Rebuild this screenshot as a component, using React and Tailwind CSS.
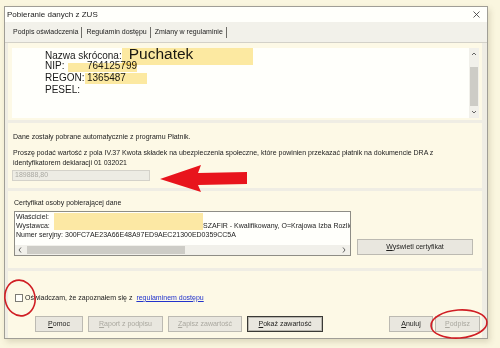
import React from "react";

const U = ({ children }) => <span className="underline">{children}</span>;

function Btn({ children, w, disabled, main }) {
  return (
    <div
      className={`h-[16px] ${w} flex items-center justify-center text-[7px] bg-[#e9e7df] border ${
        main ? "border-[#3a3a36] shadow-[inset_0_0_0_1px_#b8b6ae]" : "border-[#bcbab2]"
      } ${disabled ? "text-[#aaa89f]" : "text-[#1e1e1c]"}`}
    >
      {children}
    </div>
  );
}

function Tab({ label }) {
  return (
    <div className="flex items-center">
      <span className="text-[7px] text-[#222]">{label}</span>
      <div className="w-px h-[11px] bg-[#6e6d68] ml-[3px] mr-[4px]" />
    </div>
  );
}

export default function App() {
  return (
    <div className="relative w-[500px] h-[348px] overflow-hidden bg-[#faf6df] pt-[6px] pl-[4px] font-['Liberation_Sans',Arial,sans-serif]">
      <div className="w-[484px] h-[333px] border border-[#a09e96] bg-[#efede4] flex flex-col shadow-[2px_3px_6px_rgba(90,80,40,0.18)]">
        {/* title bar */}
        <div className="h-[15px] bg-[#fffffb] flex items-center justify-between pl-[2px] pr-[7px]">
          <span className="text-[8px] text-[#222]">Pobieranie danych z ZUS</span>
          <svg width="7" height="7" viewBox="0 0 7 7">
            <path d="M0.5 0.5L6.5 6.5M6.5 0.5L0.5 6.5" stroke="#333" strokeWidth="0.8" />
          </svg>
        </div>

        {/* tabs */}
        <div className="h-[21px] bg-[#f2f1ea] border-b border-[#d3d1c8] flex items-center pl-[8px]">
          <Tab label="Podpis oświadczenia" />
          <Tab label="Regulamin dostępu" />
          <Tab label="Zmiany w  regulaminie" />
        </div>

        {/* body */}
        <div className="flex-1 flex flex-col gap-[3px] pl-[3px] pr-[5px]">
          {/* panel 1 */}
          <div className="h-[77px] bg-[#fdf9e6] pt-[5px] pl-[4px] pr-[3px] pb-[2px] flex">
            <div className="relative flex-1 bg-[#fffffb] pl-[33px] text-[10px] text-[#1a1a1a]">
              <div className="absolute left-[110px] top-0 w-[131px] h-[17px] bg-[#fce9a4] mix-blend-multiply" />
              <div className="absolute left-[56px] top-[15px] w-[69px] h-[9px] bg-[#fce9a4] mix-blend-multiply" />
              <div className="absolute left-[73px] top-[25px] w-[62px] h-[11px] bg-[#fce9a4] mix-blend-multiply" />
              <div className="h-[12px] leading-[12px] flex items-baseline whitespace-nowrap">
                <span>Nazwa skrócona:</span>
                <span className="ml-[7px] text-[15.5px] leading-[12px]">Puchatek</span>
              </div>
              <div className="h-[12px] leading-[12px] flex">
                <span className="w-[42px]">NIP:</span>
                <span>764125799</span>
              </div>
              <div className="h-[12px] leading-[12px] flex">
                <span className="w-[42px]">REGON:</span>
                <span>1365487</span>
              </div>
              <div className="h-[12px] leading-[12px]">PESEL:</div>
            </div>
            <div className="w-[10px] bg-[#f1f0ea] flex flex-col items-center">
              <svg width="6" height="12" viewBox="0 0 6 12">
                <path d="M1 7L3 5L5 7" stroke="#555" strokeWidth="0.9" fill="none" />
              </svg>
              <div className="mt-[7px] w-[8px] h-[39px] bg-[#cdccc6]" />
              <svg className="mt-auto" width="6" height="12" viewBox="0 0 6 12">
                <path d="M1 5L3 7L5 5" stroke="#555" strokeWidth="0.9" fill="none" />
              </svg>
            </div>
          </div>

          {/* panel 2 */}
          <div className="h-[65px] bg-[#fdf9e6] pl-[5px] pt-[9px] text-[7px] text-[#222] whitespace-nowrap">
            <div className="leading-[10px]">Dane zostały pobrane automatycznie z programu Płatnik.</div>
            <div className="mt-[6px] leading-[10px]">
              Proszę podać wartość z pola IV.37 Kwota składek na ubezpieczenia społeczne, które powinien przekazać płatnik na dokumencie DRA z
            </div>
            <div className="leading-[10px]">identyfikatorem deklaracji 01 032021</div>
            <div className="mt-[2px] ml-[-1px] w-[138px] h-[11px] bg-[#edece4] border border-[#d4d2ca] flex items-center pl-[2px] text-[#aaa9a2]">
              189888,80
            </div>
          </div>

          {/* panel 3 */}
          <div className="h-[77px] bg-[#fdf9e6] pl-[6px] pt-[7px] text-[7px] text-[#222]">
            <div className="leading-[10px]">Certyfikat osoby pobierającej dane</div>
            <div className="mt-[3px] flex items-end">
              <div className="relative w-[337px] h-[45px] border border-[#8e8d86] bg-[#fffffb] flex flex-col justify-between overflow-hidden whitespace-nowrap">
                <div className="absolute left-[39px] top-[1px] w-[149px] h-[17px] bg-[#fce8a4]" />
                <div className="pl-[1px] leading-[9px]">
                  <div>Właściciel:</div>
                  <div className="flex">
                    <span className="w-[38px] shrink-0">Wystawca:</span>
                    <span className="ml-[149px]">SZAFIR - Kwalifikowany, O=Krajowa Izba Rozlic</span>
                  </div>
                  <div>Numer seryjny:  300FC7AE23A66E48A97ED9AEC21300ED0359CC5A</div>
                </div>
                <div className="h-[10px] bg-[#f1f0ea] flex items-center">
                  <svg className="ml-[2px]" width="6" height="8" viewBox="0 0 6 8">
                    <path d="M4 1.5L2 4L4 6.5" stroke="#555" strokeWidth="0.9" fill="none" />
                  </svg>
                  <div className="ml-[4px] w-[158px] h-[8px] bg-[#cdccc6]" />
                  <svg className="ml-auto mr-[3px]" width="6" height="8" viewBox="0 0 6 8">
                    <path d="M2 1.5L4 4L2 6.5" stroke="#555" strokeWidth="0.9" fill="none" />
                  </svg>
                </div>
              </div>
              <div className="ml-[6px] mb-[1px]">
                <Btn w="w-[116px]">
                  <span><U>W</U>yświetl certyfikat</span>
                </Btn>
              </div>
            </div>
          </div>

          {/* panel 4 */}
          <div className="flex-1 bg-[#fdf9e6] pt-[23px] text-[7px] text-[#222]">
            <div className="pl-[7px] flex items-center h-[8px]">
              <div className="w-[8px] h-[8px] border border-[#7c7b74] bg-[#fffffb]" />
              <span className="ml-[2px]">Oświadczam, że zapoznałem się z</span>
              <span className="ml-[4px] text-[#2233cc] underline">regulaminem dostępu</span>
            </div>
            <div className="mt-[14px] pl-[27px] pr-[2px] flex gap-[5px]">
              <Btn w="w-[48px]"><span><U>P</U>omoc</span></Btn>
              <Btn w="w-[75px]" disabled><span><U>R</U>aport z podpisu</span></Btn>
              <Btn w="w-[74px]" disabled><span><U>Z</U>apisz zawartość</span></Btn>
              <Btn w="w-[76px]" main><span><U>P</U>okaż zawartość</span></Btn>
              <div className="flex-1" />
              <div className="flex gap-[2px]">
                <Btn w="w-[44px]"><span><U>A</U>nuluj</span></Btn>
                <Btn w="w-[45px]" disabled><span><U>P</U>odpisz</span></Btn>
              </div>
            </div>
          </div>
        </div>
      </div>

      {/* annotations */}
      <svg className="absolute left-0 top-0 pointer-events-none" width="500" height="348" viewBox="0 0 500 348">
        <path d="M160 179 L201 165 L198 173 L247 172 L247 184 L198 185 L201 192 Z" fill="#e8141c" />
        <ellipse cx="20" cy="298" rx="15" ry="18" fill="none" stroke="#d01e24" strokeWidth="1.6" transform="rotate(-12 20 298)" />
        <ellipse cx="459" cy="324" rx="28" ry="14" fill="none" stroke="#d01e24" strokeWidth="1.6" transform="rotate(-4 459 324)" />
      </svg>
    </div>
  );
}
